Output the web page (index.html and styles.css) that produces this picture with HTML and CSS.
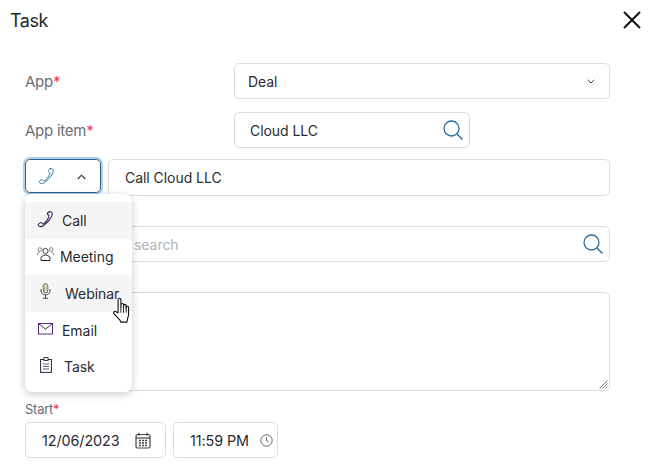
FILE: index.html
```html
<!DOCTYPE html>
<html lang="en">
<head>
    <meta charset="UTF-8">
    <meta name="viewport" content="width=device-width, initial-scale=1.0">
    <title>Task</title>
    <link rel="stylesheet" href="styles.css">
</head>
<body>
    <div class="dialog">
        <header class="dialog-head">
            <h1>Task</h1>
            <svg class="close" width="18" height="18" viewBox="0 0 18 18"><path d="M1 1l16 16M17 1L1 17" fill="none" stroke="#111" stroke-width="2"/></svg>
        </header>

        <div class="form">
            <div class="row row-app">
                <label class="label">App<span class="req">*</span></label>
                <div class="field field-app">
                    <span>Deal</span>
                    <svg width="8" height="5" viewBox="0 0 8 5"><path d="M.7.8L4 4l3.300-3.200" fill="none" stroke="#444" stroke-width="1"/></svg>
                </div>
            </div>

            <div class="row row-item">
                <label class="label">App item<span class="req">*</span></label>
                <div class="field field-item">
                    <span>Cloud LLC</span>
                    <svg class="search-icon" width="22" height="22" viewBox="0 0 22 22"><circle cx="9.500" cy="9.500" r="7.500" fill="none" stroke="#2f6f9f" stroke-width="1.300"/><path d="M15 15l5.500 5.500" stroke="#2f6f9f" stroke-width="1.500"/></svg>
                </div>
            </div>

            <div class="row row-subject">
                <div class="type-btn">
                    <svg width="18" height="18" viewBox="0 0 18 18"><path d="M12.200 1.600c1-.6 2.700.7 3 1.700.3 1.200-.6 3.200-2.200 5.600-1.700 2.600-4.300 5.200-6.400 6.600-1.400.9-3.300 1.300-4.300.8-.8-.4-1.300-1.400-1-2 .4-.7 2.200-1.900 2.900-1.700.6.100 1 1.500 1.700 1.400 1.100-.2 3-2.200 4.200-4 1.100-1.700 2-3.500 1.800-4.400-.2-.7-1.400-.9-1.500-1.500-.1-.6.300-1.900 2.800-2.500z" fill="none" stroke="#2f6f9f" stroke-width="1"/></svg>
                    <svg class="chev-up" width="9" height="6" viewBox="0 0 9 6"><path d="M.8 5l3.700-3.800L8.200 5" fill="none" stroke="#333" stroke-width="1.100"/></svg>
                </div>
                <div class="field field-subject">Call Cloud LLC</div>
            </div>

            <div class="field field-search">
                <span class="placeholder">search</span>
                <svg class="search-icon" width="22" height="22" viewBox="0 0 22 22"><circle cx="9.500" cy="9.500" r="7.500" fill="none" stroke="#2f6f9f" stroke-width="1.300"/><path d="M15 15l5.500 5.500" stroke="#2f6f9f" stroke-width="1.500"/></svg>
            </div>

            <div class="field field-text">
                <svg class="grip" width="9" height="9" viewBox="0 0 9 9"><path d="M8.500.5l-8 8M8.500 3.500l-5 5M8.500 6.500l-2 2" stroke="#555" stroke-width=".8"/></svg>
            </div>

            <label class="label label-small">Start<span class="req">*</span></label>
            <div class="row row-start">
                <div class="field field-date">
                    <span>12/06/2023</span>
                    <svg width="16" height="17" viewBox="0 0 16 17"><rect x="1" y="2.500" width="14" height="13.500" rx="1.500" fill="none" stroke="#444" stroke-width="1.200"/><path d="M1 6h14" stroke="#444" stroke-width="1.200"/><path d="M4 .8v3M12 .8v3" stroke="#444" stroke-width="1.200"/><path d="M4 8.500h2M7 8.500h2M10 8.500h2M4 11h2M7 11h2M10 11h2M4 13.500h2M7 13.500h2M10 13.500h2" stroke="#444" stroke-width="1.300"/></svg>
                </div>
                <div class="field field-time">
                    <span>11:59 PM</span>
                    <svg width="13" height="13" viewBox="0 0 13 13"><circle cx="6.500" cy="6.500" r="5.700" fill="none" stroke="#666" stroke-width="1"/><path d="M6.500 3v3.700l2.300 1.300" fill="none" stroke="#666" stroke-width="1"/></svg>
                </div>
            </div>
        </div>

        <!-- open task type menu -->
        <ul class="menu">
            <li class="menu-item active">
                <svg class="ico-call" width="18" height="18" viewBox="0 0 18 18"><path d="M12.200 1.600c1-.6 2.700.7 3 1.700.3 1.200-.6 3.200-2.200 5.600-1.700 2.600-4.300 5.200-6.400 6.600-1.400.9-3.300 1.300-4.300.8-.8-.4-1.300-1.400-1-2 .4-.7 2.200-1.900 2.900-1.700.6.100 1 1.500 1.700 1.400 1.100-.2 3-2.200 4.200-4 1.100-1.700 2-3.500 1.800-4.400-.2-.7-1.400-.9-1.500-1.500-.1-.6.300-1.900 2.800-2.500z" fill="none" stroke="#3a2458" stroke-width="1.100"/></svg>
                <span>Call</span>
            </li>
            <li class="menu-item">
                <svg class="ico-meet" width="17" height="14" viewBox="0 0 17 14"><circle cx="8.500" cy="4" r="2.600" fill="none" stroke="#333" stroke-width=".9"/><path d="M4 13.500v-2c0-2 2-3.500 4.500-3.500s4.500 1.500 4.500 3.500v2z" fill="none" stroke="#2a2340" stroke-width="1"/><circle cx="2.800" cy="2.500" r="1.800" fill="none" stroke="#777" stroke-width=".9"/><circle cx="14.200" cy="2.500" r="1.800" fill="none" stroke="#777" stroke-width=".9"/><path d="M.5 8c0-2 1-3.200 2.500-3.200M16.500 8c0-2-1-3.200-2.500-3.200" fill="none" stroke="#777" stroke-width=".9"/></svg>
                <span>Meeting</span>
            </li>
            <li class="menu-item active">
                <svg class="ico-mic" width="11" height="16" viewBox="0 0 11 16"><rect x="3.200" y=".6" width="4.600" height="9.500" rx="2.300" fill="#d9d6b8" stroke="#555" stroke-width=".8"/><path d="M3.500 3.500h1.500M3.500 5.500h1.500M3.500 7.500h1.500" stroke="#666" stroke-width=".6"/><path d="M1 6v1.700c0 2.500 2 4.300 4.500 4.300S10 10.200 10 7.700V6M5.500 12v3M3 15.300h5" fill="none" stroke="#333" stroke-width=".9"/></svg>
                <span>Webinar</span>
            </li>
            <li class="menu-item">
                <svg class="ico-mail" width="15" height="12" viewBox="0 0 15 12"><rect x=".5" y=".5" width="14" height="10.500" fill="none" stroke="#5c2a78"/><path d="M.8.800l6.700 5.400 6.700-5.400" fill="none" stroke="#333"/></svg>
                <span>Email</span>
            </li>
            <li class="menu-item">
                <svg class="ico-task" width="12" height="16" viewBox="0 0 12 16"><rect x=".6" y="2.500" width="10.800" height="12.900" fill="none" stroke="#2a2340" stroke-width="1"/><rect x="4" y=".6" width="4" height="3" fill="#fff" stroke="#2a2340" stroke-width=".9"/><path d="M3 7h6M3 9.500h6M3 12h6" stroke="#3c2a5c" stroke-width=".8"/></svg>
                <span>Task</span>
            </li>
        </ul>

        <svg class="hand" width="20" height="27" viewBox="0 0 18 24"><path d="M5.500 14V2.500C5.500 1.500 6 1 6.700 1s1.300.5 1.300 1.500V9l.1-2.200c0-1.400 2.200-1.400 2.300 0V9l.1-1.500c.1-1.300 2.100-1.300 2.200 0V10l.2-1c.3-1.200 2-1 2 .3v6.200c0 1-.2 1.800-.6 2.700l-.9 4.300H8l-.7-1.500C6 19 3.500 17 1.800 14.800c-.8-1 .2-2.400 1.400-1.800z" fill="#fff" stroke="#111" stroke-width="1" stroke-linejoin="round"/><path d="M8 9v5M10.400 9v5M12.800 9.500V14" stroke="#111" stroke-width=".8"/></svg>
    </div>
</body>
</html>
```

FILE: styles.css
```css
* {
    box-sizing: border-box;
}

body {
    margin: 0;
    background-color: #fff;
    font-family: Inter, "Liberation Sans", sans-serif;
    font-size: 14px;
    letter-spacing: -0.05px;
    color: #2b2b30;
}

.dialog {
    position: relative;
    width: 649px;
    height: 466px;
    overflow: hidden;
}

.dialog-head {
    display: flex;
    justify-content: space-between;
    align-items: center;
    height: 42px;
    padding: 0 8px 2px 10px;
}

.dialog-head h1 {
    margin: 0;
    font-size: 18px;
    font-weight: 400;
    letter-spacing: -0.5px;
    color: #26262b;
}

.form {
    display: flex;
    flex-direction: column;
    padding: 21px 39px 0 25px;
}

.row {
    display: flex;
    align-items: center;
}

.row-app {
    height: 36px;
}

.row-item {
    height: 36px;
    margin-top: 13px;
}

.row-subject {
    align-items: flex-start;
    gap: 7px;
    height: 37px;
    margin-top: 11px;
}

.row-start {
    gap: 7px;
    margin-top: 5px;
}

.label {
    flex: 0 0 209px;
    font-size: 15px;
    letter-spacing: -0.25px;
    color: #6d6d72;
}

.label-small {
    flex: none;
    margin-top: 10px;
    font-size: 13px;
    line-height: 16px;
}

.req {
    color: #f03a42;
}

.field {
    display: flex;
    justify-content: space-between;
    align-items: center;
    border: 1px solid #dcdcdc;
    border-radius: 5px;
    background-color: #fff;
}

.field-app {
    flex: 1;
    height: 36px;
    padding: 0 14px 0 13px;
}

.field-item {
    width: 236px;
    height: 36px;
    padding: 0 5px 0 15px;
}

.field-subject {
    flex: 1;
    height: 37px;
    padding-left: 16px;
}

.type-btn {
    display: flex;
    align-items: center;
    justify-content: space-between;
    width: 76px;
    height: 34px;
    padding: 0 14px 0 12px;
    border: 1px solid #2a6496;
    border-radius: 5px;
    box-shadow: 0 0 0 2px #b4cfe2;
}

.chev-up {
    margin-top: 1px;
}

.field-search {
    height: 36px;
    margin-top: 30px;
    padding: 0 5px 0 108px;
}

.placeholder {
    color: #b4b4b4;
}

.field-text {
    position: relative;
    height: 99px;
    margin-top: 30px;
}

.grip {
    position: absolute;
    right: 1px;
    bottom: 1px;
}

.field-date,
.field-time {
    height: 36px;
    font-size: 14.400px;
    letter-spacing: -0.1px;
}

.field-date {
    width: 141px;
    padding: 0 14px 0 16px;
}

.field-time {
    width: 105px;
    padding: 0 4px 0 16px;
}

.menu {
    position: absolute;
    left: 25px;
    top: 194px;
    width: 107px;
    height: 198px;
    margin: 0;
    padding: 8px 0 7px;
    list-style: none;
    background-color: #fff;
    border-radius: 7px;
    box-shadow: 0 2px 8px rgba(0, 0, 0, 0.22);
}

.menu-item {
    display: flex;
    align-items: center;
    height: 36.600px;
    padding-left: 13px;
}

.menu-item.active {
    background-color: #f5f5f5;
}

.ico-call {
    margin: -2px 7px 0 -1px;
}

.ico-meet {
    margin: -6px 6px 0 -1px;
}

.ico-mic {
    margin: -4px 14px 0 2px;
}

.ico-mail {
    margin: -3px 9px 0 0;
}

.ico-task {
    margin: -4px 12px 0 2px;
}

.hand {
    position: absolute;
    left: 112px;
    top: 297px;
}
```
